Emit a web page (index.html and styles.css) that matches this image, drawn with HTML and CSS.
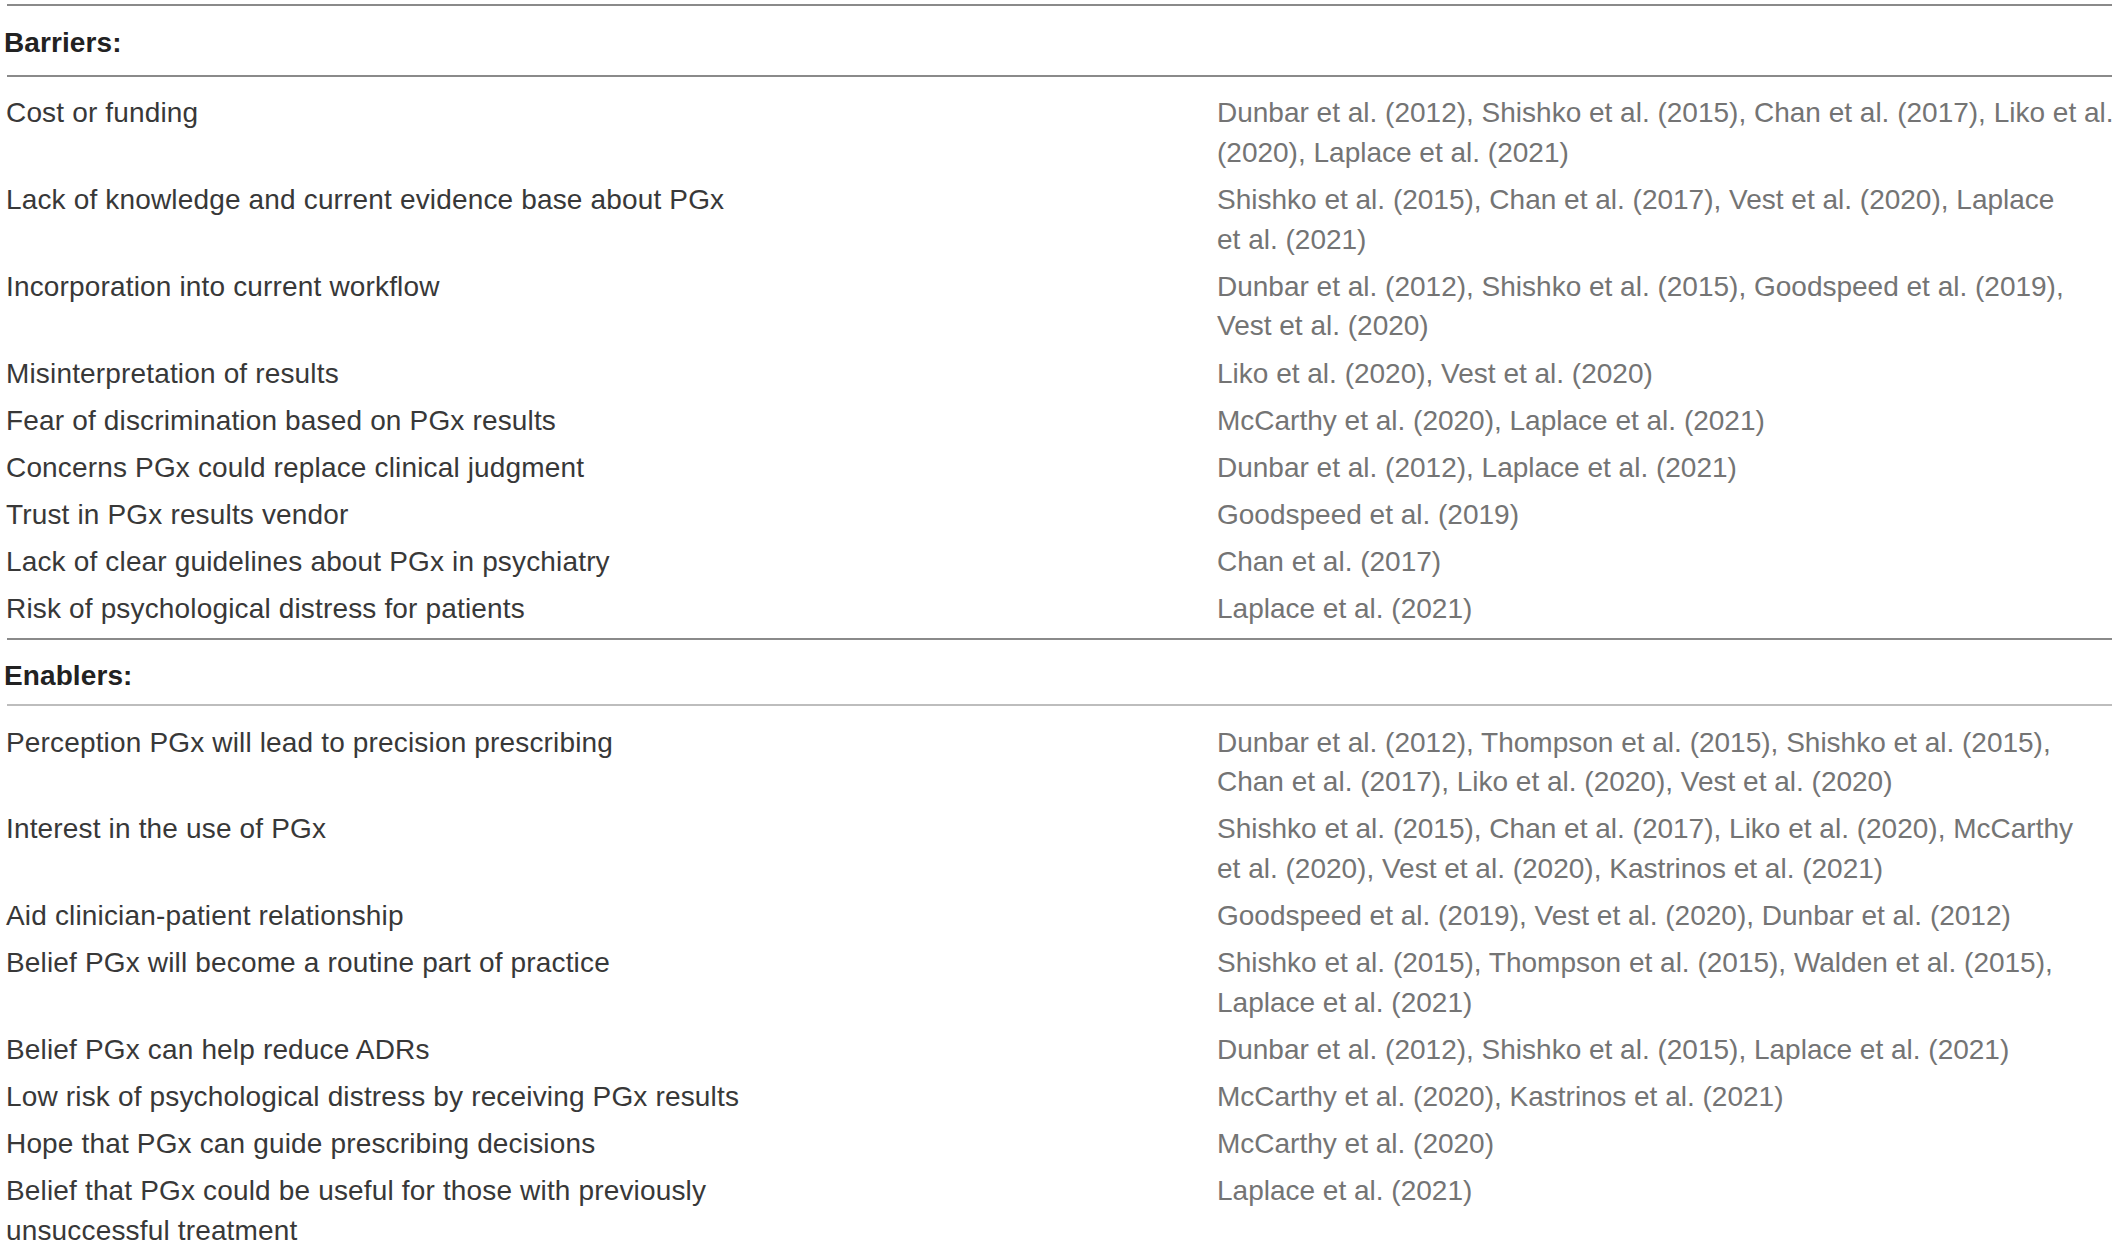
FILE: index.html
```html
<!DOCTYPE html>
<html lang="en">
<head>
<meta charset="utf-8">
<title>Barriers and enablers</title>
<link rel="stylesheet" href="styles.css">
</head>
<body>
<div class="table">
  <div class="section-head first"><span class="head-label">Barriers:</span></div>
  <div class="section-body">
    <div class="row"><div class="factor">Cost or funding</div><div class="refs">Dunbar et&nbsp;al. (2012), Shishko et&nbsp;al. (2015), Chan et&nbsp;al. (2017), Liko et&nbsp;al.<br>(2020), Laplace et&nbsp;al. (2021)</div></div>
    <div class="row"><div class="factor">Lack of knowledge and current evidence base about PGx</div><div class="refs">Shishko et&nbsp;al. (2015), Chan et&nbsp;al. (2017), Vest et&nbsp;al. (2020), Laplace<br>et&nbsp;al. (2021)</div></div>
    <div class="row"><div class="factor">Incorporation into current workflow</div><div class="refs">Dunbar et&nbsp;al. (2012), Shishko et&nbsp;al. (2015), Goodspeed et&nbsp;al. (2019),<br>Vest et&nbsp;al. (2020)</div></div>
    <div class="row"><div class="factor">Misinterpretation of results</div><div class="refs">Liko et&nbsp;al. (2020), Vest et&nbsp;al. (2020)</div></div>
    <div class="row"><div class="factor">Fear of discrimination based on PGx results</div><div class="refs">McCarthy et&nbsp;al. (2020), Laplace et&nbsp;al. (2021)</div></div>
    <div class="row"><div class="factor">Concerns PGx could replace clinical judgment</div><div class="refs">Dunbar et&nbsp;al. (2012), Laplace et&nbsp;al. (2021)</div></div>
    <div class="row"><div class="factor">Trust in PGx results vendor</div><div class="refs">Goodspeed et&nbsp;al. (2019)</div></div>
    <div class="row"><div class="factor">Lack of clear guidelines about PGx in psychiatry</div><div class="refs">Chan et&nbsp;al. (2017)</div></div>
    <div class="row"><div class="factor">Risk of psychological distress for patients</div><div class="refs">Laplace et&nbsp;al. (2021)</div></div>
  </div>
  <div class="section-head second"><span class="head-label">Enablers:</span></div>
  <div class="section-body light">
    <div class="row"><div class="factor">Perception PGx will lead to precision prescribing</div><div class="refs">Dunbar et&nbsp;al. (2012), Thompson et&nbsp;al. (2015), Shishko et&nbsp;al. (2015),<br>Chan et&nbsp;al. (2017), Liko et&nbsp;al. (2020), Vest et&nbsp;al. (2020)</div></div>
    <div class="row"><div class="factor">Interest in the use of PGx</div><div class="refs">Shishko et&nbsp;al. (2015), Chan et&nbsp;al. (2017), Liko et&nbsp;al. (2020), McCarthy<br>et&nbsp;al. (2020), Vest et&nbsp;al. (2020), Kastrinos et&nbsp;al. (2021)</div></div>
    <div class="row"><div class="factor">Aid clinician-patient relationship</div><div class="refs">Goodspeed et&nbsp;al. (2019), Vest et&nbsp;al. (2020), Dunbar et&nbsp;al. (2012)</div></div>
    <div class="row"><div class="factor">Belief PGx will become a routine part of practice</div><div class="refs">Shishko et&nbsp;al. (2015), Thompson et&nbsp;al. (2015), Walden et&nbsp;al. (2015),<br>Laplace et&nbsp;al. (2021)</div></div>
    <div class="row"><div class="factor">Belief PGx can help reduce ADRs</div><div class="refs">Dunbar et&nbsp;al. (2012), Shishko et&nbsp;al. (2015), Laplace et&nbsp;al. (2021)</div></div>
    <div class="row"><div class="factor">Low risk of psychological distress by receiving PGx results</div><div class="refs">McCarthy et&nbsp;al. (2020), Kastrinos et&nbsp;al. (2021)</div></div>
    <div class="row"><div class="factor">Hope that PGx can guide prescribing decisions</div><div class="refs">McCarthy et&nbsp;al. (2020)</div></div>
    <div class="row"><div class="factor">Belief that PGx could be useful for those with previously<br>unsuccessful treatment</div><div class="refs">Laplace et&nbsp;al. (2021)</div></div>
  </div>
</div>
</body>
</html>
```

FILE: styles.css
```css
html, body {
  margin: 0;
  padding: 0;
  background: #ffffff;
  overflow: hidden;
}

body {
  font-family: "Liberation Sans", Arial, sans-serif;
  font-size: 28px;
  line-height: 39.7px;
  color: #333333;
}

.table {
  margin: 4px 0 0 7px;
  width: 2105px;
}

.section-head {
  border-top: 2px solid #8a8a8a;
  font-weight: bold;
  color: #222222;
  letter-spacing: 0.1px;
}

.section-head.first {
  padding: 16.5px 0 12.8px;
}

.section-head.second {
  padding: 15.5px 0 8.8px;
}

.head-label {
  margin-left: -3px;
}

.section-body {
  border-top: 2px solid #8a8a8a;
  padding: 12.5px 0 6.1px;
}

.section-body.light {
  border-top-color: #bdbdbd;
}

.row {
  display: grid;
  grid-template-columns: 1210px 1fr;
  padding: 3.7px 0;
}

.factor {
  color: #383838;
  white-space: nowrap;
  margin-left: -1px;
  letter-spacing: 0.16px;
}

.refs {
  color: #747474;
  white-space: nowrap;
}
```
